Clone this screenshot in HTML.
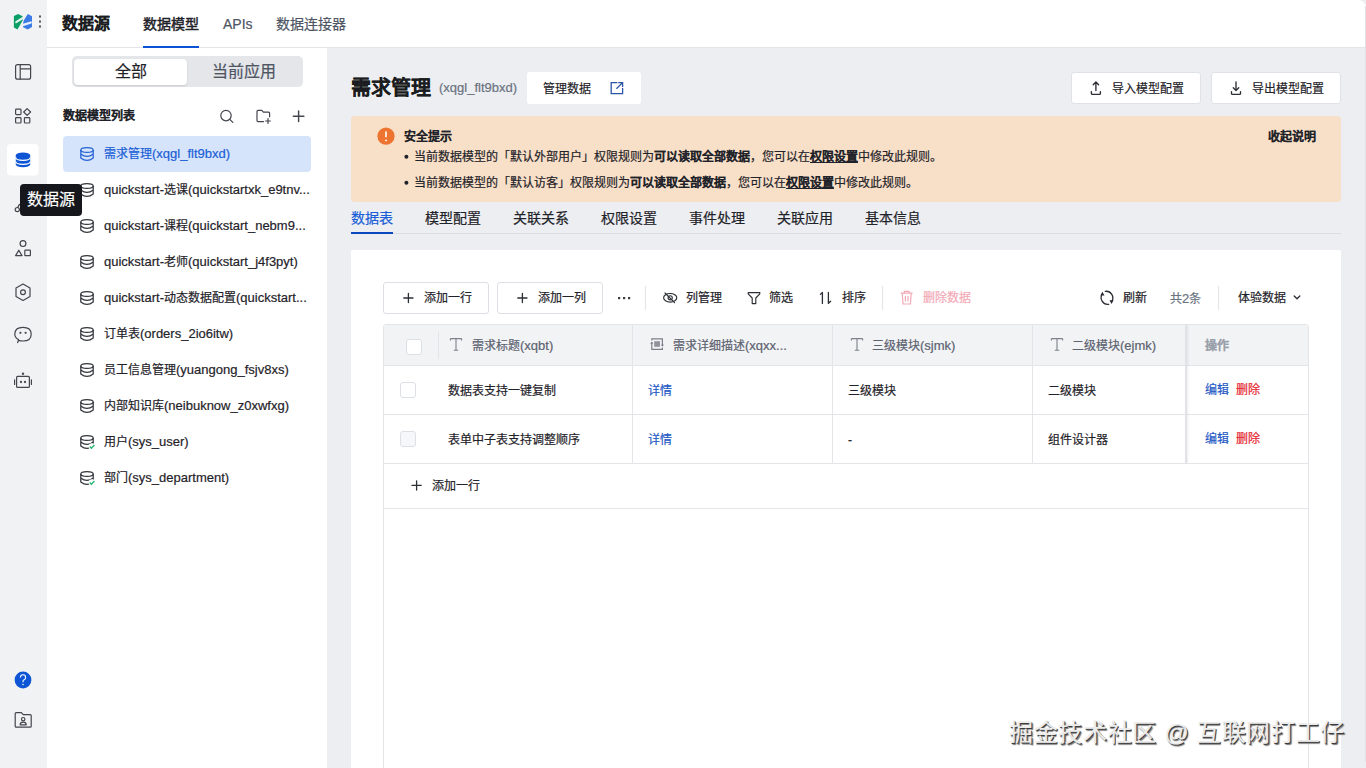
<!DOCTYPE html>
<html lang="zh-CN"><head><meta charset="utf-8">
<style>
*{box-sizing:border-box;margin:0;padding:0}
html,body{width:1366px;height:768px;overflow:hidden}
body{position:relative;background:#eceef2;font-family:"Liberation Sans",sans-serif;color:#1f2329;font-size:12px;line-height:1}
.a{position:absolute}
.t{position:absolute;white-space:nowrap;line-height:1;-webkit-text-stroke:0.2px currentColor}
.t[style*="font-weight:700"],.t b{-webkit-text-stroke:0.05px currentColor}
.l{font-size:13px}
svg{position:absolute;overflow:visible}
#side{left:0;top:0;width:47px;height:768px;background:#f1f2f4}
#hdr{left:47px;top:0;width:1319px;height:48px;background:#fff;border-bottom:1px solid #e3e5e9;border-top-right-radius:8px}
#lp{left:47px;top:48px;width:280px;height:720px;background:#fff}
.ic{stroke:#43464d;fill:none;stroke-width:1.2;stroke-linecap:round;stroke-linejoin:round}
</style></head><body>
<div class="a" id="side"></div>
<div class="a" id="hdr"></div>
<div class="a" id="lp"></div>
<div class="a" style="left:1365px;top:6px;width:1px;height:756px;background:#dfe1e5"></div>

<!-- logo -->
<svg style="left:0;top:0" width="47" height="47" viewBox="0 0 47 47">
  <path d="M13.9 16 L18.1 14.1 L22.6 16.3 V20.4 L17.5 29.5 L13.9 27.5 Z" fill="#0b9f68"/>
  <path d="M27.8 14.1 L32 16.3 V27 L27.6 29.6 L23.1 27.2 V23 L23.9 20.2 Z" fill="#3a7be6"/>
  <path d="M15.6 21.3 L22.8 16.8 V19.2 L15.8 23.4 Q14.6 22.4 15.6 21.3 Z" fill="#e9f6f0"/>
  <path d="M22.9 23.7 L31.4 21.2 Q32.2 22.4 31.4 23.4 L22.9 26.3 Z" fill="#e9effa"/>
  <rect x="39" y="15.5" width="2" height="2" fill="#555"/>
  <rect x="39" y="20.5" width="2" height="2" fill="#555"/>
  <rect x="39" y="25.5" width="2" height="2" fill="#555"/>
</svg>

<!-- sidebar icons -->
<svg style="left:0;top:0" width="47" height="768" viewBox="0 0 47 768">
  <g class="ic">
    <rect x="15.6" y="64.6" width="15" height="14.6" rx="2"/>
    <path d="M20.2 64.6 V79.2 M20.2 68.8 H30.6"/>
    <rect x="15.6" y="109.2" width="5.4" height="5.4" rx="0.8"/>
    <rect x="15.6" y="117.6" width="5.4" height="5.4" rx="0.8"/>
    <rect x="24.4" y="117.6" width="5.4" height="5.4" rx="0.8"/>
    <path d="M27.1 108.6 L30.6 112 L27.1 115.4 L23.7 112 Z"/>
  </g>

  <rect x="7" y="144" width="31.5" height="31.5" rx="4" fill="#fff" stroke="none"/>
  <path d="M15.8 155.2 A7.2 2.8 0 0 1 30.2 155.2 V164.4 A7.2 2.8 0 0 1 15.8 164.4 Z" fill="#0d55d4"/>
  <path d="M15.8 157.6 A7.2 2.8 0 0 0 30.2 157.6 M15.8 161.6 A7.2 2.8 0 0 0 30.2 161.6" stroke="#fff" stroke-width="1.1" fill="none"/>
  <g class="ic">
    <circle cx="17.3" cy="209.6" r="2.1"/><path d="M17.9 207.4 Q18.6 204.3 21 204.1"/>
    <circle cx="23" cy="243.6" r="2.9"/>
    <path d="M15.6 255.6 L18.8 250.2 L22 255.6 Z"/>
    <rect x="24.8" y="250.2" width="5.6" height="5.4" rx="0.6"/>
    <path d="M23 284 L30 288 V296.4 L23 300.4 L16 296.4 V288 Z"/>
    <circle cx="23" cy="292.2" r="2.4"/>
    <path d="M17.6 342.6 L18.6 339.6 Q14.8 337.6 14.8 334.2 Q14.8 327.4 23 327.4 Q31.2 327.4 31.2 334.2 Q31.2 341 23 341 Q20.6 341 18.6 340.4 Z" stroke-linejoin="round"/>
    <rect x="16.6" y="376.4" width="12.8" height="11" rx="1"/>
    <path d="M14.6 379.8 V384.4 M31.4 379.8 V384.4"/>
    <path d="M15.2 726.2 V713.6 Q15.2 712.6 16.2 712.6 H21.4 L23.2 714.6 H30.2 Q31.2 714.6 31.2 715.6 V726.2 Q31.2 727.2 30.2 727.2 H16.2 Q15.2 727.2 15.2 726.2 Z"/>
    <circle cx="23.2" cy="719.2" r="1.7"/>
    <path d="M20.2 724.8 Q20.2 722.2 23.2 722.2 Q26.2 722.2 26.2 724.8 Z"/>
  </g>
  <g fill="#4a4d55">
    <circle cx="20.4" cy="332.8" r="1.15"/><circle cx="25.6" cy="332.8" r="1.15"/>
    <circle cx="21" cy="382" r="1.15"/><circle cx="25" cy="382" r="1.15"/>
    <circle cx="23" cy="373.8" r="1.2"/>
  </g>
  <circle cx="23" cy="680" r="8.4" fill="#0d55d4"/>
  <path d="M20.4 677.6 Q20.4 674.8 23 674.8 Q25.6 674.8 25.6 677.4 Q25.6 679 23.8 679.9 Q23 680.4 23 681.6 V682.2" stroke="#fff" stroke-width="1.1" fill="none"/><circle cx="23" cy="684.6" r="0.75" fill="#fff"/>
</svg>
<!-- tooltip -->
<div class="a" style="left:20px;top:184px;width:62px;height:32px;background:#15171c;border-radius:4px;z-index:5"></div>
<div class="t" style="left:27px;top:192px;font-size:16px;color:#fff;z-index:6">数据源</div>

<!-- header -->
<div class="t" style="left:62px;top:16px;font-size:16px;font-weight:700;color:#1a1c20">数据源</div>
<div class="t" style="left:143px;top:17px;font-size:14px;color:#1f2329;-webkit-text-stroke:0.45px #1f2329">数据模型</div>
<div class="a" style="left:143px;top:46px;width:56px;height:2px;background:#0b52d6"></div>
<div class="t" style="left:223px;top:17px;font-size:14px;color:#4e5563">APIs</div>
<div class="t" style="left:276px;top:17px;font-size:14px;color:#4e5563">数据连接器</div>

<!-- left panel -->
<div class="a" style="left:72px;top:56px;width:231px;height:31px;background:#e4e6ea;border-radius:5px"></div>
<div class="a" style="left:74px;top:58.5px;width:113px;height:26.5px;background:#fff;border-radius:4px;box-shadow:0 1px 2px rgba(0,0,0,.12)"></div>
<div class="t" style="left:115px;top:64px;font-size:16px;color:#1f2329">全部</div>
<div class="t" style="left:212px;top:64px;font-size:16px;color:#4e5563">当前应用</div>
<div class="t" style="left:63px;top:110px;font-size:12px;font-weight:700;color:#1f2329">数据模型列表</div>
<svg style="left:0;top:0" width="330" height="130" viewBox="0 0 330 130">
  <g class="ic" stroke="#3d4048">
    <circle cx="226" cy="115.6" r="5.2"/><path d="M229.8 119.4 L232.8 122.4"/>
    <path d="M263.6 121.6 H258 Q257 121.6 257 120.6 V111.4 Q257 110.4 258 110.4 H261.8 L263.4 112.2 H268.6 Q269.6 112.2 269.6 113.2 V116.8"/>
    <path d="M268 118.6 V123.4 M265.6 121 H270.4"/>
    <path d="M298.6 110.9 V121.5 M293.3 116.2 H303.9" stroke-width="1.45"/>
  </g>
</svg>
<div class="a" style="left:63px;top:136px;width:248px;height:36px;background:#d6e4fb;border-radius:4px"></div>
<div class="t" style="left:104px;top:147px;color:#1a5fd6">需求管理<span class="l">(xqgl_flt9bxd)</span></div>
<div class="t" style="left:104px;top:183px;color:#1f2329"><span class="l">quickstart-</span>选课<span class="l">(quickstartxk_e9tnv...</span></div>
<div class="t" style="left:104px;top:219px;color:#1f2329"><span class="l">quickstart-</span>课程<span class="l">(quickstart_nebm9...</span></div>
<div class="t" style="left:104px;top:255px;color:#1f2329"><span class="l">quickstart-</span>老师<span class="l">(quickstart_j4f3pyt)</span></div>
<div class="t" style="left:104px;top:291px;color:#1f2329"><span class="l">quickstart-</span>动态数据配置<span class="l">(quickstart...</span></div>
<div class="t" style="left:104px;top:327px;color:#1f2329">订单表<span class="l">(orders_2io6itw)</span></div>
<div class="t" style="left:104px;top:363px;color:#1f2329">员工信息管理<span class="l">(yuangong_fsjv8xs)</span></div>
<div class="t" style="left:104px;top:399px;color:#1f2329">内部知识库<span class="l">(neibuknow_z0xwfxg)</span></div>
<div class="t" style="left:104px;top:435px;color:#1f2329">用户<span class="l">(sys_user)</span></div>
<div class="t" style="left:104px;top:471px;color:#1f2329">部门<span class="l">(sys_department)</span></div>
<svg style="left:0;top:0" width="330" height="500" viewBox="0 0 330 500">
<g stroke="#2462d4" fill="none" stroke-width="1.25">
<ellipse cx="87" cy="150.0" rx="6.2" ry="2.4"/>
<path d="M80.8 150.0 V158.0 Q87 162.8 93.2 158.0 V150.0 M80.8 154.0 Q87 158.8 93.2 154.0"/>
</g>
<g stroke="#33363c" fill="none" stroke-width="1.25">
<ellipse cx="87" cy="186.0" rx="6.2" ry="2.4"/>
<path d="M80.8 186.0 V194.0 Q87 198.8 93.2 194.0 V186.0 M80.8 190.0 Q87 194.8 93.2 190.0"/>
</g>
<g stroke="#33363c" fill="none" stroke-width="1.25">
<ellipse cx="87" cy="222.0" rx="6.2" ry="2.4"/>
<path d="M80.8 222.0 V230.0 Q87 234.8 93.2 230.0 V222.0 M80.8 226.0 Q87 230.8 93.2 226.0"/>
</g>
<g stroke="#33363c" fill="none" stroke-width="1.25">
<ellipse cx="87" cy="258.0" rx="6.2" ry="2.4"/>
<path d="M80.8 258.0 V266.0 Q87 270.8 93.2 266.0 V258.0 M80.8 262.0 Q87 266.8 93.2 262.0"/>
</g>
<g stroke="#33363c" fill="none" stroke-width="1.25">
<ellipse cx="87" cy="294.0" rx="6.2" ry="2.4"/>
<path d="M80.8 294.0 V302.0 Q87 306.8 93.2 302.0 V294.0 M80.8 298.0 Q87 302.8 93.2 298.0"/>
</g>
<g stroke="#33363c" fill="none" stroke-width="1.25">
<ellipse cx="87" cy="330.0" rx="6.2" ry="2.4"/>
<path d="M80.8 330.0 V338.0 Q87 342.8 93.2 338.0 V330.0 M80.8 334.0 Q87 338.8 93.2 334.0"/>
</g>
<g stroke="#33363c" fill="none" stroke-width="1.25">
<ellipse cx="87" cy="366.0" rx="6.2" ry="2.4"/>
<path d="M80.8 366.0 V374.0 Q87 378.8 93.2 374.0 V366.0 M80.8 370.0 Q87 374.8 93.2 370.0"/>
</g>
<g stroke="#33363c" fill="none" stroke-width="1.25">
<ellipse cx="87" cy="402.0" rx="6.2" ry="2.4"/>
<path d="M80.8 402.0 V410.0 Q87 414.8 93.2 410.0 V402.0 M80.8 406.0 Q87 410.8 93.2 406.0"/>
</g>
<g stroke="#33363c" fill="none" stroke-width="1.25">
<ellipse cx="87" cy="438.0" rx="6.2" ry="2.4"/>
<path d="M80.8 438.0 V446.0 Q87 450.8 93.2 446.0 V438.0 M80.8 442.0 Q87 446.8 93.2 442.0"/>
</g>
<circle cx="92" cy="446.6" r="3.4" fill="#fff"/><path d="M89.8 446.6 L91.4 448.2 L94.4 445.0" stroke="#2bb673" stroke-width="1.4" fill="none"/>
<g stroke="#33363c" fill="none" stroke-width="1.25">
<ellipse cx="87" cy="474.0" rx="6.2" ry="2.4"/>
<path d="M80.8 474.0 V482.0 Q87 486.8 93.2 482.0 V474.0 M80.8 478.0 Q87 482.8 93.2 478.0"/>
</g>
<circle cx="92" cy="482.6" r="3.4" fill="#fff"/><path d="M89.8 482.6 L91.4 484.2 L94.4 481.0" stroke="#2bb673" stroke-width="1.4" fill="none"/>
</svg>

<!-- main header -->
<div class="t" style="left:351px;top:78px;font-size:20px;font-weight:700;color:#1a1c20">需求管理</div>
<div class="t" style="left:439px;top:81px;font-size:13px;color:#6b7280">(xqgl_flt9bxd)</div>
<div class="a" style="left:527px;top:72px;width:114px;height:32px;background:#fff;border-radius:3px"></div>
<div class="t" style="left:543px;top:83px;font-size:12px;color:#1f2329">管理数据</div>
<svg style="left:0;top:0" width="1366" height="120" viewBox="0 0 1366 120">
  <g fill="none" stroke="#2b56a8" stroke-width="1.3">
    <path d="M617.4 82.6 H611.2 V93.6 H622.6 V88"/>
    <path d="M618.2 82.6 H622.6 V87 M622.6 82.6 L616.4 88.8"/>
  </g>
</svg>
<div class="a" style="left:1071px;top:72px;width:130px;height:32px;background:#fff;border:1px solid #dfe2e7;border-radius:3px"></div>
<div class="a" style="left:1211px;top:72px;width:130px;height:32px;background:#fff;border:1px solid #dfe2e7;border-radius:3px"></div>
<svg style="left:0;top:0" width="1366" height="120" viewBox="0 0 1366 120">
  <g fill="none" stroke="#2b2e34" stroke-width="1.3" stroke-linecap="round" stroke-linejoin="round">
    <path d="M1095.9 82.2 V90.6 M1093.2 84.8 L1095.9 82 L1098.6 84.8 M1091.4 91.6 V93.4 Q1091.4 94.4 1092.4 94.4 H1099.4 Q1100.4 94.4 1100.4 93.4 V91.6" stroke-width="1.35"/>
    <path d="M1236 81.8 V90.4 M1233.3 87.8 L1236 90.6 L1238.7 87.8 M1231.5 91.6 V93.4 Q1231.5 94.4 1232.5 94.4 H1239.5 Q1240.5 94.4 1240.5 93.4 V91.6" stroke-width="1.35"/>
  </g>
</svg>
<div class="t" style="left:1112px;top:83px;font-size:12px;color:#1f2329">导入模型配置</div>
<div class="t" style="left:1252px;top:83px;font-size:12px;color:#1f2329">导出模型配置</div>

<!-- alert -->
<div class="a" style="left:351px;top:116px;width:990px;height:86px;background:#f8dfc7;border-radius:4px"></div>
<svg style="left:0;top:0" width="1366" height="210" viewBox="0 0 1366 210">
  <circle cx="386" cy="136.2" r="8.6" fill="#ec7430"/>
  <rect x="385.2" y="131.2" width="1.6" height="6.2" rx="0.8" fill="#fff"/>
  <circle cx="386" cy="140.4" r="0.9" fill="#fff"/>
  <circle cx="406.4" cy="156.8" r="2" fill="#1f2329"/>
  <circle cx="406.4" cy="182.8" r="2" fill="#1f2329"/>
</svg>
<div class="t" style="left:404px;top:131px;font-size:12px;font-weight:700;color:#1f2329">安全提示</div>
<div class="t" style="left:1268px;top:131px;font-size:12px;font-weight:700;color:#1f2329">收起说明</div>
<div class="t" style="left:414px;top:151px;font-size:12px;color:#1f2329">当前数据模型的「默认外部用户」权限规则为<b>可以读取全部数据</b>，您可以在<b style="text-decoration:underline">权限设置</b>中修改此规则。</div>
<div class="t" style="left:414px;top:177px;font-size:12px;color:#1f2329">当前数据模型的「默认访客」权限规则为<b>可以读取全部数据</b>，您可以在<b style="text-decoration:underline">权限设置</b>中修改此规则。</div>

<!-- tabs -->
<div class="a" style="left:351px;top:233px;width:990px;height:1px;background:#d9dce1"></div>
<div class="a" style="left:351px;top:232px;width:42px;height:2px;background:#0b47bd"></div>
<div class="t" style="left:351px;top:211px;font-size:14px;color:#1a5fd6">数据表</div>
<div class="t" style="left:425px;top:211px;font-size:14px;color:#1f2329">模型配置</div>
<div class="t" style="left:513px;top:211px;font-size:14px;color:#1f2329">关联关系</div>
<div class="t" style="left:601px;top:211px;font-size:14px;color:#1f2329">权限设置</div>
<div class="t" style="left:689px;top:211px;font-size:14px;color:#1f2329">事件处理</div>
<div class="t" style="left:777px;top:211px;font-size:14px;color:#1f2329">关联应用</div>
<div class="t" style="left:865px;top:211px;font-size:14px;color:#1f2329">基本信息</div>

<!-- card -->
<div class="a" style="left:351px;top:250px;width:990px;height:530px;background:#fff;border-radius:2px"></div>

<!-- toolbar -->
<div class="a" style="left:383px;top:282px;width:106px;height:32px;border:1px solid #dcdfe4;border-radius:3px"></div>
<div class="a" style="left:497px;top:282px;width:106px;height:32px;border:1px solid #dcdfe4;border-radius:3px"></div>
<div class="a" style="left:645px;top:286px;width:1px;height:24px;background:#e3e5e8"></div>
<div class="a" style="left:882px;top:286px;width:1px;height:24px;background:#e3e5e8"></div>
<div class="a" style="left:1218px;top:286px;width:1px;height:24px;background:#e3e5e8"></div>
<div class="t" style="left:424px;top:292px;font-size:12px;color:#1f2329">添加一行</div>
<div class="t" style="left:538px;top:292px;font-size:12px;color:#1f2329">添加一列</div>
<div class="t" style="left:686px;top:292px;font-size:12px;color:#1f2329">列管理</div>
<div class="t" style="left:769px;top:292px;font-size:12px;color:#1f2329">筛选</div>
<div class="t" style="left:842px;top:292px;font-size:12px;color:#1f2329">排序</div>
<div class="t" style="left:923px;top:292px;font-size:12px;color:#f3a9b6">删除数据</div>
<div class="t" style="left:1123px;top:292px;font-size:12px;color:#1f2329">刷新</div>
<div class="t" style="left:1170px;top:292px;font-size:12px;color:#6b7280">共<span class="l">2</span>条</div>
<div class="t" style="left:1238px;top:292px;font-size:12px;color:#1f2329">体验数据</div>
<svg style="left:0;top:0" width="1366" height="768" viewBox="0 0 1366 768">
  <g fill="none" stroke="#2b2e34" stroke-width="1.3" stroke-linecap="round" stroke-linejoin="round">
    <path d="M408.4 293.4 V302.6 M403.8 298 H413"/>
    <path d="M522.4 293.4 V302.6 M517.8 298 H527"/>
    <path d="M416.6 480.8 V490 M412 485.4 H421.2"/>
    <ellipse cx="670.2" cy="297.8" rx="6.6" ry="4.3" stroke-width="1.15"/>
    <circle cx="670.2" cy="297.8" r="2.1" stroke-width="1.1"/>
    <path d="M665 293 L674.6 302.6" stroke-width="1.15"/>
    <path d="M748.2 292.6 H759.8 V293.8 L755.8 298 V303.6 H752.2 V298 L748.2 293.8 Z" stroke-width="1.15"/>
    <path d="M822.4 292.4 V303.4 M820.4 294.4 L822.4 292.4 M828.4 292.4 V303.4 L830.6 301.2"/>
    <path d="M1294.2 296 L1297 298.8 L1299.8 296"/>
  </g>
  <path d="M1109.5 300.2 L1113.6 300.2 L1111.5 304 Z M1100.4 295.6 L1104.5 295.6 L1102.4 291.8 Z" fill="#2b2e34"/>
  <g fill="#3a3c40"><rect x="618" y="297" width="2.2" height="2.2"/><rect x="623" y="297" width="2.2" height="2.2"/><rect x="628" y="297" width="2.2" height="2.2"/></g>
  <g fill="none" stroke="#f3a9b6" stroke-width="1.2">
    <path d="M900.8 293.2 H912.6 M904.4 293.2 V291.4 H909 V293.2 M902.2 293.2 L903 304 H910.4 L911.2 293.2 M905.4 296 V301.4 M908 296 V301.4"/>
  </g>
  <g fill="none" stroke="#2b2e34" stroke-width="1.3" stroke-linecap="round">
    <path d="M1105.3 291.3 A6.6 6.6 0 0 1 1111.6 301.6"/>
    <path d="M1108.7 304.3 A6.6 6.6 0 0 1 1102.4 293.9"/>
  </g>
</svg>

<!-- table -->
<div class="a" style="left:383px;top:324px;width:926px;height:460px;border:1px solid #e3e5e8;border-radius:3px 3px 0 0"></div>
<div class="a" style="left:384px;top:325px;width:924px;height:41px;background:#f2f3f5;border-bottom:1px solid #e3e5e8"></div>
<div class="a" style="left:384px;top:414px;width:924px;height:1px;background:#e3e5e8"></div>
<div class="a" style="left:384px;top:463px;width:924px;height:1px;background:#e3e5e8"></div>
<div class="a" style="left:384px;top:508px;width:924px;height:1px;background:#e3e5e8"></div>
<div class="a" style="left:438px;top:332px;width:1px;height:27px;background:#e3e5e8"></div>
<div class="a" style="left:632px;top:325px;width:1px;height:138px;background:#e3e5e8"></div>
<div class="a" style="left:832px;top:325px;width:1px;height:138px;background:#e3e5e8"></div>
<div class="a" style="left:1032px;top:325px;width:1px;height:138px;background:#e3e5e8"></div>
<div class="a" style="left:1185px;top:325px;width:2px;height:138px;background:#e1e3e7;box-shadow:1px 0 2px rgba(0,0,0,.08)"></div>
<div class="a" style="left:406px;top:339px;width:16px;height:16px;background:#fff;border:1px solid #dcdfe4;border-radius:3px"></div>
<div class="a" style="left:400px;top:382px;width:16px;height:16px;background:#fff;border:1px solid #dcdfe4;border-radius:3px"></div>
<div class="a" style="left:400px;top:431px;width:16px;height:16px;background:#f6f7f8;border:1px solid #dcdfe4;border-radius:3px"></div>
<div class="t" style="left:472px;top:339px;font-size:12px;color:#5c6270">需求标题<span class="l">(xqbt)</span></div>
<div class="t" style="left:673px;top:339px;font-size:12px;color:#5c6270">需求详细描述<span class="l">(xqxx...</span></div>
<div class="t" style="left:872px;top:339px;font-size:12px;color:#5c6270">三级模块<span class="l">(sjmk)</span></div>
<div class="t" style="left:1072px;top:339px;font-size:12px;color:#5c6270">二级模块<span class="l">(ejmk)</span></div>
<div class="t" style="left:1205px;top:340px;font-size:12px;font-weight:700;color:#9aa0aa">操作</div>
<svg style="left:0;top:0" width="1366" height="768" viewBox="0 0 1366 768">
  <g fill="none" stroke="#7b808a" stroke-width="1.1">
    <path d="M450.4 338.6 H461.6 M456 338.6 V350.2 M450.4 338.6 V340.6 M461.6 338.6 V340.6 M453.8 350.2 H458.2"/>
    <path d="M851.4 338.6 H862.6 M857 338.6 V350.2 M851.4 338.6 V340.6 M862.6 338.6 V340.6 M854.8 350.2 H859.2"/>
    <path d="M1051.4 338.6 H1062.6 M1057 338.6 V350.2 M1051.4 338.6 V340.6 M1062.6 338.6 V340.6 M1054.8 350.2 H1059.2"/>
    <path d="M651.8 340.6 V338.8 H662.4 V345 M662.4 347.4 V349.4 H651.8 V342.6" stroke-width="1.2"/>
  </g>
  <path d="M650.2 343.6 H653.4 L651.8 341.8 Z M660.8 344.8 H664 L662.4 346.6 Z" fill="#6b7079"/>
  <rect x="654.2" y="341.2" width="5.8" height="5.6" fill="#8f949c"/>
</svg>
<div class="t" style="left:448px;top:385px;font-size:12px;color:#1f2329">数据表支持一键复制</div>
<div class="t" style="left:648px;top:385px;font-size:12px;color:#1f59c4">详情</div>
<div class="t" style="left:848px;top:385px;font-size:12px;color:#1f2329">三级模块</div>
<div class="t" style="left:1048px;top:385px;font-size:12px;color:#1f2329">二级模块</div>
<div class="t" style="left:1205px;top:384px;font-size:12px;color:#1f59c4">编辑</div>
<div class="t" style="left:1236px;top:384px;font-size:12px;color:#e5252e">删除</div>
<div class="t" style="left:448px;top:434px;font-size:12px;color:#1f2329">表单中子表支持调整顺序</div>
<div class="t" style="left:648px;top:434px;font-size:12px;color:#1f59c4">详情</div>
<div class="t" style="left:848px;top:434px;font-size:12px;color:#1f2329">-</div>
<div class="t" style="left:1048px;top:434px;font-size:12px;color:#1f2329">组件设计器</div>
<div class="t" style="left:1205px;top:433px;font-size:12px;color:#1f59c4">编辑</div>
<div class="t" style="left:1236px;top:433px;font-size:12px;color:#e5252e">删除</div>
<div class="t" style="left:432px;top:480px;font-size:12px;color:#1f2329">添加一行</div>

<!-- watermark -->
<div class="t" style="left:1009px;top:721px;font-size:24px;letter-spacing:0.7px;color:#ececec;text-shadow:1px 1px 0 #3c3c3c,1.5px 1.5px 1px #777">掘金技术社区 @ 互联网打工仔</div>
</body></html>
